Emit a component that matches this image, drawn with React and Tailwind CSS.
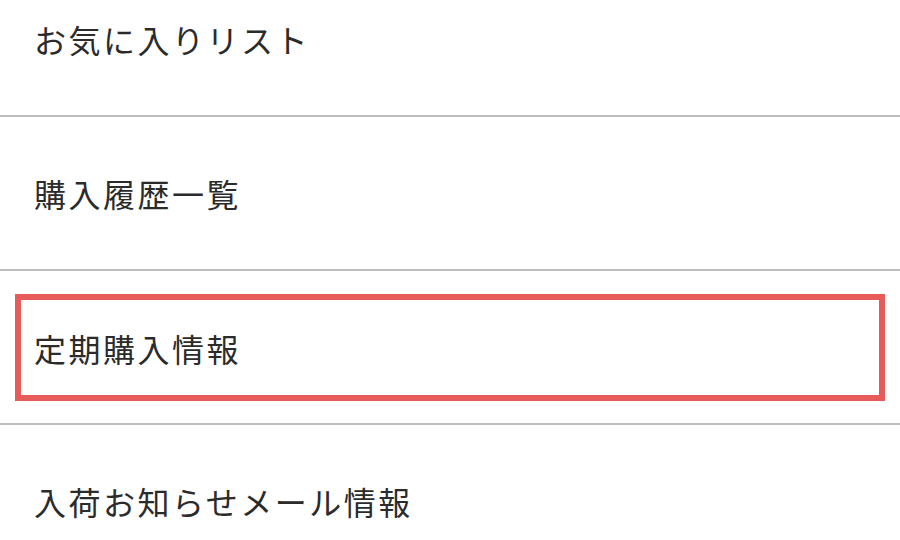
// Account menu list
const items = [
  { label: 'お気に入りリスト' },
  { label: '購入履歴一覧' },
  { label: '定期購入情報', highlight: true },
  { label: '入荷お知らせメール情報' },
];

function MenuRow({ label, highlight }) {
  if (highlight) {
    return (
      <li className="h-[154px] border-b-2 border-[#bdbdbd] px-[15px] pt-[23px] pb-[22px]">
        <div className="h-full flex items-center px-[13px] border-[6px] border-[#e85b5b]">
          <span>{label}</span>
        </div>
      </li>
    );
  }
  return (
    <li className="h-[154px] flex items-center px-[34px] border-b-2 border-[#bdbdbd]">
      <span>{label}</span>
    </li>
  );
}

export default function App() {
  return (
    <div
      className="w-[900px] h-[540px] overflow-hidden bg-white text-[#2b2b2b] text-[32px] tracking-[2.5px]"
      style={{ fontFamily: '"Noto Sans CJK JP", "Noto Sans", sans-serif' }}
    >
      <ul className="-mt-[37px]">
        {items.map((item) => (
          <MenuRow key={item.label} {...item} />
        ))}
      </ul>
    </div>
  );
}
